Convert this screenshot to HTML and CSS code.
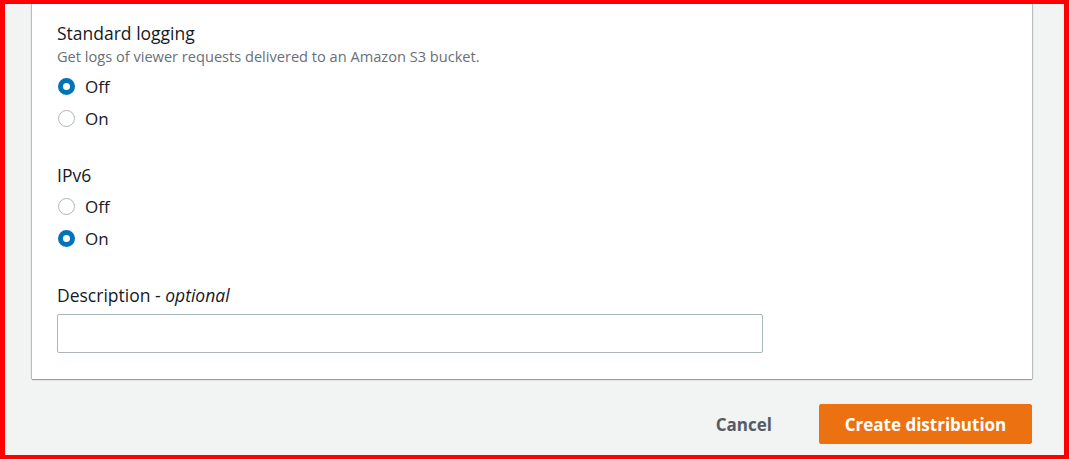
FILE: index.html
```html
<!DOCTYPE html>
<html lang="en">
<head>
<meta charset="UTF-8">
<meta name="viewport" content="width=device-width, initial-scale=1.0">
<title>Create distribution</title>
<link rel="stylesheet" href="styles.css">
</head>
<body>

<div class="frame">
    <div class="card">
        <div class="field">
            <div class="label">Standard logging</div>
            <div class="hint">Get logs of viewer requests delivered to an Amazon S3 bucket.</div>
            <div class="radio-group">
                <label class="radio"><span class="dot checked"></span>Off</label>
                <label class="radio"><span class="dot"></span>On</label>
            </div>
        </div>

        <div class="field">
            <div class="label">IPv6</div>
            <div class="radio-group">
                <label class="radio"><span class="dot"></span>Off</label>
                <label class="radio"><span class="dot checked"></span>On</label>
            </div>
        </div>

        <div class="field">
            <div class="label">Description - <i>optional</i></div>
            <input class="text-input" type="text">
        </div>
    </div>

    <div class="actions">
        <button class="btn-link">Cancel</button>
        <button class="btn-primary">Create distribution</button>
    </div>
</div>

</body>
</html>
```

FILE: styles.css
```css
/* page */
body {
    margin: 0;
    padding: 0;
    font-family: "Open Sans", Roboto, Arial, sans-serif;
    color: #16191f;
}

.frame {
    height: 459px;
    box-sizing: border-box;
    border: 5px solid #ff0000;
    border-top-width: 4px;
    border-bottom-width: 4px;
    background-color: #f2f3f3;
    overflow: hidden;
}

.card {
    width: 1000px;
    margin-left: 27px;
    box-sizing: border-box;
    padding: 17px 25px 26px;
    background-color: #fff;
    box-shadow: 0 1px 1px 0 rgba(0, 28, 36, 0.35), 1px 0 1px 0 rgba(0, 28, 36, 0.2), -1px 0 1px 0 rgba(0, 28, 36, 0.2);
}

.field {
    margin-bottom: 29px;
}

.field:last-child {
    margin-bottom: 0;
}

.label {
    font-size: 17.5px;
    line-height: 24px;
}

.hint {
    font-size: 14.6px;
    line-height: 22px;
    color: #687078;
}

.radio-group {
    margin-top: 3px;
}

.radio {
    display: flex;
    align-items: center;
    height: 32px;
    font-size: 17px;
}

.dot {
    width: 17px;
    height: 17px;
    box-sizing: border-box;
    margin-left: 0.5px;
    margin-right: 10.5px;
    border: 1.5px solid #aab7b8;
    border-radius: 50%;
    background-color: #fff;
}

.dot.checked {
    border: 5.5px solid #0073bb;
}

.text-input {
    display: block;
    width: 706px;
    height: 39px;
    margin-top: 7px;
    box-sizing: border-box;
    border: 1px solid #aab7b8;
    border-radius: 2px;
    background-color: #fff;
}

.actions {
    display: flex;
    justify-content: flex-end;
    align-items: center;
    width: 1027px;
    margin-top: 25px;
    gap: 27px;
}

.actions button {
    font-family: inherit;
    font-size: 17px;
    font-weight: bold;
    height: 40px;
    border-radius: 2px;
    cursor: pointer;
}

.btn-link {
    background: none;
    border: none;
    color: #545b64;
    padding: 0 20px;
}

.btn-primary {
    background-color: #ec7211;
    border: 1px solid #ec7211;
    color: #fff;
    width: 213px;
    padding: 0;
}
```
